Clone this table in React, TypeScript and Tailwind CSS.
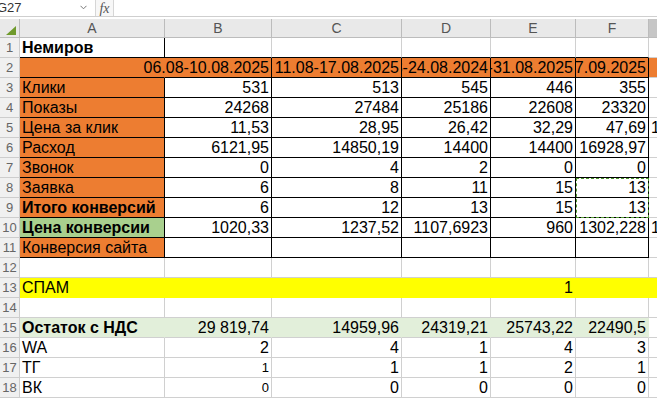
import clsx from "clsx";

type C = {
  v?: string;
  bg?: string;
  bold?: boolean;
  left?: boolean;
  r?: string;
  b?: string;
  small?: boolean;
  spill?: boolean;
};

const GRID_R = "border-r-[#d0d0d0]";
const GRID_B = "border-b-[#d0d0d0]";
const ORANGE = "bg-[#ed7d31]";

const boxed = (v: string): C => ({ v, r: "border-r-black", b: "border-b-black" });

const dataRow = (label: string, vals: string[], opts: Partial<C> = {}): C[] => [
  { v: label, left: true, bg: ORANGE, r: "border-r-black", b: "border-b-black", ...opts },
  ...vals.map(boxed),
];

const plainRow = (label: string, vals: string[], opts: Partial<C> = {}): C[] => [
  { v: label, left: true, ...opts },
  ...vals.map((v) => ({ v, ...opts, bold: false })),
];

const rows: C[][] = [
  [
    { v: "Немиров", bold: true, left: true, r: "border-r-black", b: "border-b-black" },
    ...Array.from({ length: 5 }, () => ({ b: "border-b-black" })),
    {},
  ],
  [
    { bg: ORANGE, r: "border-r-[#ed7d31]", b: "border-b-black" },
    { v: "06.08-10.08.2025", bg: ORANGE, r: "border-r-black", b: "border-b-black", spill: true },
    { v: "11.08-17.08.2025", bg: ORANGE, r: "border-r-black", b: "border-b-black" },
    { v: "18.08-24.08.2024", bg: ORANGE, r: "border-r-black", b: "border-b-black" },
    { v: "25.08-31.08.2025", bg: ORANGE, r: "border-r-black", b: "border-b-black" },
    { v: "01.09-07.09.2025", bg: ORANGE, r: "border-r-black", b: "border-b-black" },
    { bg: ORANGE },
  ],
  [...dataRow("Клики", ["531", "513", "545", "446", "355"]), {}],
  [...dataRow("Показы", ["24268", "27484", "25186", "22608", "23320"]), {}],
  [...dataRow("Цена за клик", ["11,53", "28,95", "26,42", "32,29", "47,69"]), { v: "1", left: true }],
  [...dataRow("Расход", ["6121,95", "14850,19", "14400", "14400", "16928,97"]), {}],
  [...dataRow("Звонок", ["0", "4", "2", "0", "0"]), {}],
  [...dataRow("Заявка", ["6", "8", "11", "15", "13"]), {}],
  [...dataRow("Итого конверсий", ["6", "12", "13", "15", "13"], { bold: true }), {}],
  [
    ...dataRow("Цена конверсии", ["1020,33", "1237,52", "1107,6923", "960", "1302,228"], {
      bold: true,
      bg: "bg-[#a9d08e]",
    }),
    { v: "1", left: true },
  ],
  [...dataRow("Конверсия сайта", ["", "", "", "", ""]), {}],
  Array.from({ length: 7 }, () => ({})),
  [
    { v: "СПАМ", left: true, bg: "bg-[#ffff00]", r: "border-r-[#ffff00]", b: "border-b-[#ffff00]" },
    ...["", "", "", "1", "", ""].map((v) => ({
      v,
      bg: "bg-[#ffff00]",
      r: "border-r-[#ffff00]",
      b: "border-b-[#ffff00]",
    })),
  ],
  Array.from({ length: 7 }, () => ({})),
  [
    ...plainRow("Остаток с НДС", ["29 819,74", "14959,96", "24319,21", "25743,22", "22490,5"], {
      bold: true,
      bg: "bg-[#e2efda]",
      r: "border-r-[#e2efda]",
    }),
    {},
  ],
  [...plainRow("WA", ["2", "4", "1", "4", "3"]), {}],
  [
    { v: "ТГ", left: true },
    { v: "1", small: true },
    ...["1", "1", "2", "1"].map((v) => ({ v })),
    {},
  ],
  [
    { v: "ВК", left: true },
    { v: "0", small: true },
    ...["0", "0", "0", "0"].map((v) => ({ v })),
    {},
  ],
];

const cols = ["A", "B", "C", "D", "E", "F", "G"];

const Cell = ({ c }: { c: C }) => (
  <div
    className={clsx(
      "flex min-w-0 items-center whitespace-nowrap border-r border-b px-[2px] leading-[19px] text-black",
      c.spill ? "overflow-visible" : "overflow-hidden",
      c.left ? "justify-start" : "justify-end",
      c.bg ?? "bg-white",
      c.r ?? GRID_R,
      c.b ?? GRID_B,
      c.bold && "font-bold",
      c.small ? "text-[13px]" : "text-[16px]"
    )}
  >
    <span className="shrink-0">{c.v}</span>
  </div>
);

export default function App() {
  return (
    <div className="h-[398px] w-[657px] overflow-hidden bg-white font-['Liberation_Sans',Arial,sans-serif]">
      <div className="flex h-[17px] border-b border-[#cfcfcf] text-[13px] text-[#333]">
        <div className="relative flex w-[95px] items-center">
          <span className="-ml-[3px]">G27</span>
          <svg className="absolute left-[80px] top-[5px]" width="7" height="5" viewBox="0 0 7 5">
            <path d="M0.5 0.8 L3.5 3.8 L6.5 0.8" fill="none" stroke="#777" strokeWidth="1" />
          </svg>
        </div>
        <div className="flex w-[19px] items-center justify-center border-x border-[#d6d6d6] bg-[#f7f7f7] font-['Liberation_Serif',serif] text-[14px] italic text-[#555]">
          fx
        </div>
        <div className="flex-1" />
      </div>
      <div className="relative mt-[2px] grid grid-cols-[20px_145px_107px_130px_89px_85px_73px_80px] grid-rows-[19px_repeat(18,20px)]">
        <div className="relative border-r border-b border-[#bcbcbc] bg-[#e9e9e9]">
          <svg className="absolute left-[6px] top-[7px]" width="10" height="9" viewBox="0 0 10 9">
            <path d="M10 0 L10 9 L0 9 Z" fill="#6f9a2c" />
          </svg>
        </div>
        {cols.map((l) => (
          <div
            key={l}
            className={clsx(
              "flex items-center justify-center border-r border-b border-[#bcbcbc] text-[14px] text-[#555]",
              l === "G" ? "bg-[#c6c6c6]" : "bg-[#e9e9e9]"
            )}
          >
            {l}
          </div>
        ))}
        {rows.map((row, i) => (
          <div key={i} className="contents">
            <div className="flex items-center justify-center border-r border-b border-[#cdcdcd] bg-[#f0f0f0] text-[13px] text-[#666]">
              {i + 1}
            </div>
            {row.map((c, j) => (
              <Cell key={j} c={c} />
            ))}
          </div>
        ))}
        <div className="pointer-events-none absolute left-[576px] top-[159px] h-[40px] w-[73px] border border-dashed border-[#4f9a2f]" />
      </div>
    </div>
  );
}
